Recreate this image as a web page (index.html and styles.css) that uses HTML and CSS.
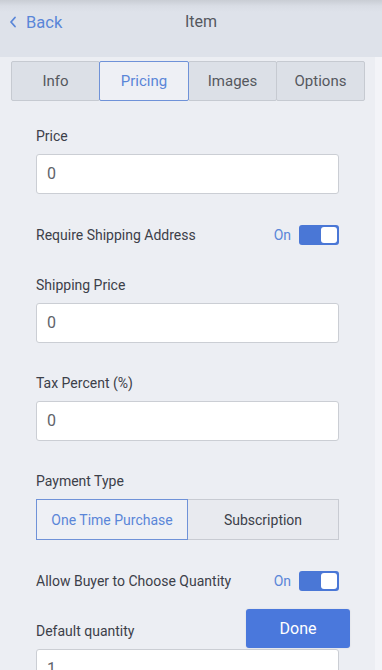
FILE: index.html
```html
<!DOCTYPE html>
<html>
<head>
<meta charset="utf-8">
<link rel="stylesheet" href="styles.css">
</head>
<body>
<header class="topbar">
  <a class="back">
    <svg class="chev" width="8" height="12" viewBox="0 0 8 12"><polyline points="6,1.5 2,6 6,10.5" fill="none" stroke="#5a86d8" stroke-width="1.8" stroke-linecap="round" stroke-linejoin="round"/></svg>
    <span>Back</span>
  </a>
  <div class="title">Item</div>
</header>
<main class="page">
  <nav class="tabs">
    <div class="tab">Info</div>
    <div class="tab active">Pricing</div>
    <div class="tab">Images</div>
    <div class="tab">Options</div>
  </nav>
  <form class="form">
    <div class="field">
      <label class="label">Price</label>
      <div class="input">0</div>
    </div>
    <div class="row">
      <span class="label">Require Shipping Address</span>
      <span class="switch-wrap"><span class="on">On</span><span class="switch"><span class="knob"></span></span></span>
    </div>
    <div class="field">
      <label class="label">Shipping Price</label>
      <div class="input">0</div>
    </div>
    <div class="field">
      <label class="label">Tax Percent (%)</label>
      <div class="input">0</div>
    </div>
    <div class="field">
      <label class="label">Payment Type</label>
      <div class="segment">
        <div class="seg active">One Time Purchase</div>
        <div class="seg">Subscription</div>
      </div>
    </div>
    <div class="row">
      <span class="label">Allow Buyer to Choose Quantity</span>
      <span class="switch-wrap"><span class="on">On</span><span class="switch"><span class="knob"></span></span></span>
    </div>
    <div class="field">
      <label class="label">Default quantity</label>
      <div class="input">1</div>
    </div>
  </form>
  <button class="done" type="button">Done</button>
</main>
</body>
</html>
```
FILE: styles.css
```css
html, body {
  margin: 0;
  padding: 0;
}
body {
  background: #f3f4f8;
  font-family: Roboto, "Liberation Sans", sans-serif;
  color: #3c4049;
  width: 382px;
  height: 670px;
  overflow: hidden;
}
.topbar {
  height: 57px;
  background: linear-gradient(to bottom, #c9cdd4 0px, #d9dde5 6px, #dee2ea 12px);
  position: relative;
  display: flex;
  align-items: flex-start;
}
.back {
  display: flex;
  align-items: center;
  gap: 9px;
  padding: 10px 0 0 9px;
  height: 24px;
  color: #5a86d8;
  font-size: 16.5px;
}
.chev {
  display: block;
}
.title {
  position: absolute;
  left: 0;
  right: 0;
  top: 10px;
  text-align: center;
  font-size: 16px;
  line-height: 24px;
  color: #55585e;
  padding-left: 20px;
}
.page {
  width: 375px;
  background: #eceef3;
  height: 613px;
  position: relative;
}
.tabs {
  display: grid;
  grid-template-columns: 88px 89px 88px 88px;
  padding: 4px 11px 0;
}
.tab {
  height: 38px;
  margin-right: -1px;
  display: flex;
  align-items: center;
  justify-content: center;
  background: #dce0e7;
  border: 1px solid #c6cad1;
  border-radius: 2px;
  font-size: 15px;
  color: #55585e;
}
.tab.active {
  background: #eef0f5;
  border-color: #6f92d8;
  color: #5a86d8;
  position: relative;
  z-index: 1;
}
.form {
  display: flex;
  flex-direction: column;
  gap: 31px;
  padding: 26px 36px 0;
}
.field {
  display: flex;
  flex-direction: column;
  gap: 9px;
}
.label {
  font-size: 14px;
  line-height: 18px;
  color: #3c4049;
}
.input {
  height: 38px;
  background: #fff;
  border: 1px solid #cbced4;
  border-radius: 3px;
  font-size: 16px;
  line-height: 38px;
  padding-left: 10px;
  color: #60636a;
}
.row {
  display: flex;
  align-items: center;
  justify-content: space-between;
  height: 20px;
}
.switch-wrap {
  display: flex;
  align-items: center;
  gap: 8px;
}
.on {
  font-size: 14px;
  color: #5a86d8;
}
.switch {
  width: 40px;
  height: 20px;
  border-radius: 3px;
  background: #4a77d6;
  display: flex;
  align-items: center;
  justify-content: flex-end;
  padding-right: 2px;
  box-sizing: border-box;
}
.knob {
  width: 16px;
  height: 16px;
  background: #fff;
  border-radius: 3px;
}
.segment {
  display: grid;
  grid-template-columns: 152px 151px;
  height: 41px;
}
.seg {
  display: flex;
  align-items: center;
  justify-content: center;
  font-size: 14px;
  border: 1px solid #c8cbd2;
  background: #e8eaef;
  color: #3c4049;
  margin-left: -1px;
}
.seg.active {
  margin-left: 0;
  border-color: #6f92d8;
  background: #eef0f5;
  color: #5a86d8;
  position: relative;
  z-index: 1;
}
.done {
  position: absolute;
  left: 246px;
  top: 552px;
  width: 104px;
  height: 39px;
  border: none;
  border-radius: 3px;
  background: #4a78dc;
  color: #fff;
  font-family: Roboto, "Liberation Sans", sans-serif;
  font-size: 16px;
  box-shadow: 0 0 2px rgba(0,0,0,0.1);
  z-index: 5;
}
```
